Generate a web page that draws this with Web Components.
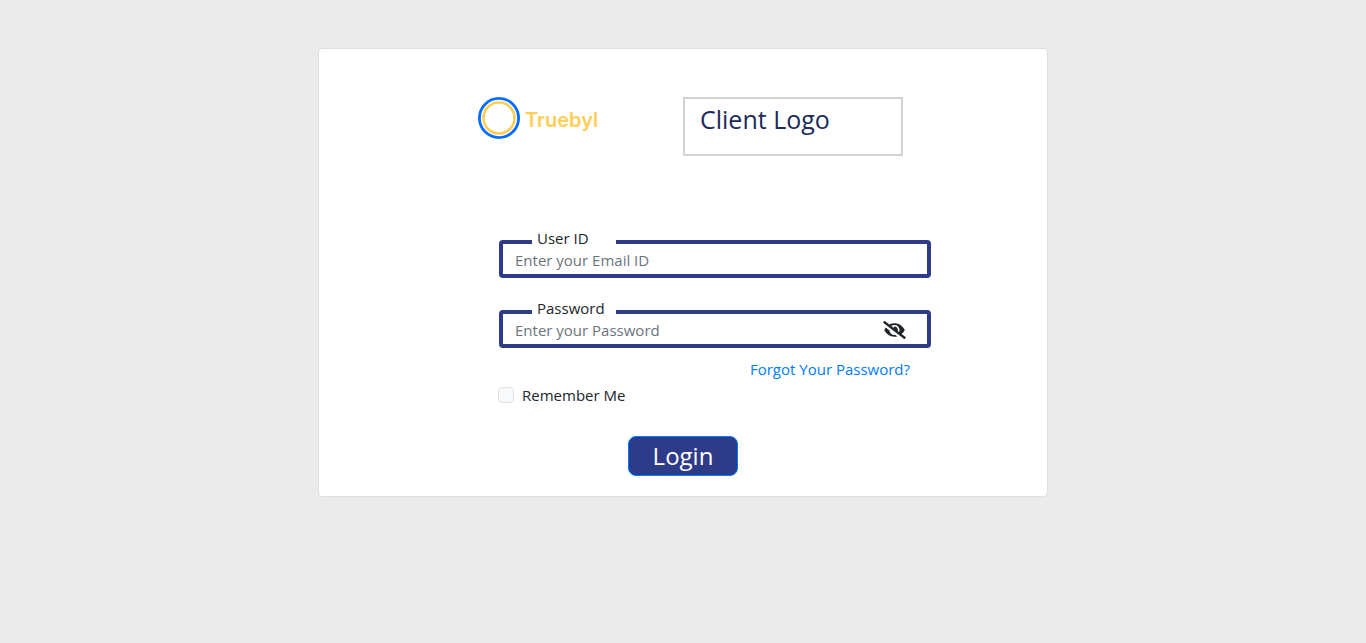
<!DOCTYPE html>
<html lang="en">
<head>
<meta charset="utf-8">
<meta name="viewport" content="width=device-width, initial-scale=1">
<title>Truebyl Login</title>
<style>
  body { margin: 0; min-height: 100vh; background: #ebebeb; color: #212529; font: 15px/24px "Open Sans", "Noto Sans", sans-serif; }
</style>
</head>
<body>
<login-card>
  <brand-logo slot="brand"></brand-logo>
  <client-logo slot="client">Client Logo</client-logo>
  <login-form></login-form>
</login-card>

<script>
const define = (name, html, setup) => customElements.define(name, class extends HTMLElement {
  constructor() {
    super();
    const template = document.createElement('template');
    template.innerHTML = html;
    this.attachShadow({ mode: 'open' }).append(template.content.cloneNode(true));
  }
  connectedCallback() { if (setup) setup(this, this.shadowRoot); }
});

define('brand-logo', `
<style>
  :host { display: flex; align-items: center; gap: 5px; height: 42px; color: #fdce56; font: 600 20px/42px Inter, sans-serif; }
  svg { display: block; width: 42px; height: 42px; }
  span { padding-top: 3px; }
</style>
<svg viewBox="0 0 42 42" fill="none" aria-hidden="true">
  <circle cx="21" cy="21" r="19.6" stroke="#066bff" stroke-width="2.8"/>
  <circle cx="21" cy="21" r="15.5" stroke="#fdce56" stroke-width="2.6"/>
</svg>
<span>Truebyl</span>`);

define('client-logo', `
<style>
  :host { display: block; box-sizing: border-box; width: 220px; height: 59px; border: 2px solid #d3d3d3; padding: 4px 15px; color: #202a5a; font-size: 25px; line-height: 32px; }
</style>
<slot></slot>`);

define('outlined-field', `
<style>
  :host { display: block; }
  .field { position: relative; display: flex; align-items: center; box-sizing: border-box; height: 38px; border: 4px solid #2e3b89; border-radius: 4px; background: #fff; }
  label { position: absolute; top: -17px; left: 29px; box-sizing: border-box; width: 84px; height: 22px; padding-left: 5px; line-height: 22px; background: #fff; }
  input { position: relative; flex: 1; min-width: 0; height: 24px; border: 0; padding: 0 12px; margin-top: 2px; background: transparent; color: #495057; font: inherit; outline: 0; }
  input::placeholder { color: #6c757d; opacity: 1; }
</style>
<div class="field"><label for="control"></label><input id="control"><slot></slot></div>`,
(host, root) => {
  root.querySelector('label').textContent = host.getAttribute('label');
  const input = root.querySelector('input');
  input.type = host.getAttribute('type');
  input.placeholder = host.getAttribute('placeholder');
  host.addEventListener('toggle-visibility', () => {
    input.type = input.type === 'password' ? 'text' : 'password';
  });
});

define('visibility-toggle', `
<style>
  :host { display: block; margin-right: 21px; }
  button { display: flex; align-items: center; justify-content: center; width: 24px; height: 24px; border: 0; padding: 2px 0 0; box-sizing: border-box; background: none; color: #212529; cursor: pointer; }
  svg { display: block; width: 23px; height: 18px; }
</style>
<button type="button" aria-label="Show password">
  <svg viewBox="0 0 640 512" aria-hidden="true" fill="currentColor">
    <path d="M320 400c-75.85 0-137.25-58.71-142.9-133.11L72.2 185.82c-13.79 17.3-26.48 35.59-36.72 55.59a32.35 32.35 0 0 0 0 29.19C89.71 376.41 197.07 448 320 448c26.91 0 52.87-4 77.89-10.46L346 397.39a144.13 144.13 0 0 1-26 2.61zm313.82 58.1l-110.55-85.44a331.25 331.25 0 0 0 81.25-102.07 32.35 32.35 0 0 0 0-29.19C550.29 135.59 442.93 64 320 64a308.15 308.15 0 0 0-147.32 37.7L45.46 3.37A16 16 0 0 0 23 6.18L3.37 31.45A16 16 0 0 0 6.18 53.9l588.36 454.73a16 16 0 0 0 22.46-2.81l19.64-25.27a16 16 0 0 0-2.82-22.45zm-183.72-142l-39.3-30.38A94.75 94.75 0 0 0 416 256a94.76 94.76 0 0 0-121.31-92.21A47.65 47.65 0 0 1 304 192a46.64 46.64 0 0 1-1.54 10l-73.61-56.89A142.31 142.31 0 0 1 320 112a143.92 143.92 0 0 1 144 144c0 21.63-5.29 41.79-13.9 60.11z"/>
  </svg>
</button>`,
(host, root) => {
  root.querySelector('button').onclick = () =>
    host.dispatchEvent(new CustomEvent('toggle-visibility', { bubbles: true }));
});

define('remember-check', `
<style>
  :host { display: block; }
  label { display: flex; align-items: center; gap: 8px; width: max-content; }
  input { appearance: none; box-sizing: border-box; width: 16px; height: 16px; margin: 0; border: 1px solid #dee2e6; border-radius: 4px; background: #f8f9fa; }
  input:checked { background: #2e3b89; }
</style>
<label><input type="checkbox"><slot></slot></label>`);

define('login-form', `
<style>
  :host { display: block; }
  form { display: flex; flex-direction: column; }
  .fields { display: grid; gap: 32px; margin: 0 116px 0 180px; }
  a { align-self: flex-end; margin: 9px 137px 0 0; color: #007bff; text-decoration: none; }
  remember-check { margin: 2px 0 0 179px; }
  .submit { align-self: center; box-sizing: border-box; width: 110px; height: 40px; margin-top: 29px; border: 1px solid #007bff; border-radius: 8px; padding: 0; background: #2e3b89; color: #fff; font: inherit; font-size: 24px; line-height: 38px; cursor: pointer; }
</style>
<form>
  <div class="fields">
    <outlined-field label="User ID" type="email" placeholder="Enter your Email ID"></outlined-field>
    <outlined-field label="Password" type="password" placeholder="Enter your Password"><visibility-toggle></visibility-toggle></outlined-field>
  </div>
  <a href="#forgot">Forgot Your Password?</a>
  <remember-check>Remember Me</remember-check>
  <button class="submit" type="submit">Login</button>
</form>`);

define('login-card', `
<style>
  :host { display: block; padding: 48px 16px; }
  main { box-sizing: border-box; max-width: 730px; margin: 0 auto; border: 1px solid #dfdfdf; border-radius: 4px; padding: 48px 0 20px; background: #fff; }
  header { display: grid; grid-template-columns: 1fr 1fr; margin-bottom: 84px; }
  .brand { padding-left: 159px; }
</style>
<main>
  <header><div class="brand"><slot name="brand"></slot></div><slot name="client"></slot></header>
  <slot></slot>
</main>`);
</script>
</body>
</html>
